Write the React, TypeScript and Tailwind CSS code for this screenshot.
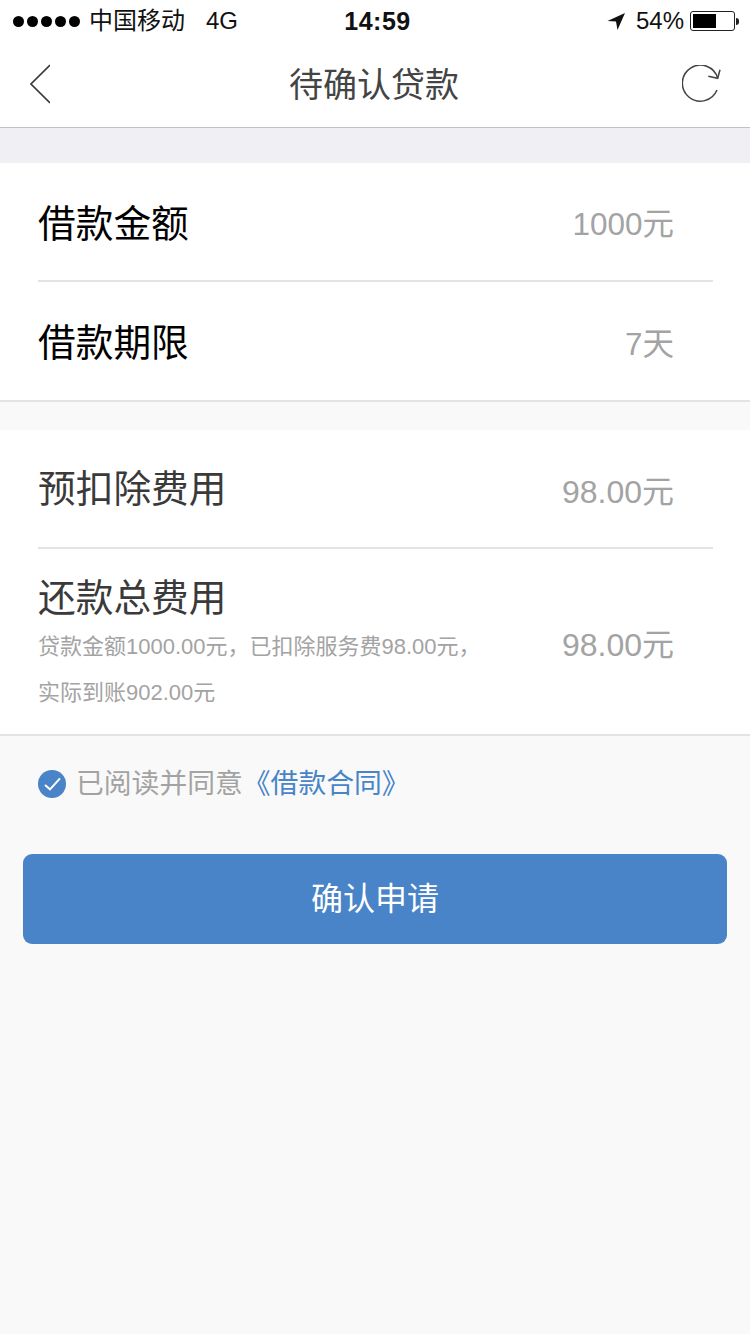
const font = "[font-family:'Liberation_Sans','Noto_Sans_CJK_SC',sans-serif]";

function StatusBar() {
  return (
    <div className="flex h-10 items-center justify-between pl-[13px] pr-[11px] pt-[2px] text-[24px] text-[#111]">
      <div className="flex w-[300px] items-center">
        <div className="flex gap-[3px]">
          {[0, 1, 2, 3, 4].map((i) => (
            <span key={i} className="h-[11px] w-[11px] rounded-full bg-black" />
          ))}
        </div>
        <span className="ml-[9px] leading-none">中国移动</span>
        <span className="ml-[21px] leading-none">4G</span>
      </div>
      <span className="ml-[3px] text-[25px] font-bold leading-none tracking-[0.5px]">14:59</span>
      <div className="flex w-[300px] items-center justify-end">
        <svg width="18" height="18" viewBox="0 0 18 18" className="mr-[11px]">
          <path d="M18 1 L0.5 9 L9 9.5 L10.5 18 Z" fill="#111" />
        </svg>
        <span className="leading-none">54%</span>
        <div className="ml-[6px] h-[20px] w-[45px] rounded-[3px] border border-[#222] p-[2px]">
          <div className="h-full w-[23px] bg-black" />
        </div>
        <div className="ml-[1px] h-[7px] w-[3px] rounded-r-full bg-[#222]" />
      </div>
    </div>
  );
}

function NavBar() {
  return (
    <div className="flex h-[88px] items-center border-b border-[#bfbfc4] pl-[30px] pr-[29px]">
      <div className="w-[100px]">
        <svg width="20" height="40" viewBox="0 0 20 40" fill="none" stroke="#3a3a3a" strokeWidth="1.6">
          <path d="M20 1 L1 20 L20 39" />
        </svg>
      </div>
      <span className="flex-1 pr-[3px] pt-[2px] text-center text-[34px] leading-none text-[#444]">待确认贷款</span>
      <div className="flex w-[100px] justify-end">
        <svg width="39" height="37" viewBox="0 0 39 37" fill="none" stroke="#444" strokeWidth="1.5">
          <path d="M35 25 A18 18 0 1 1 35.7 13.3" />
          <path d="M38 4.7 L35.7 13.3 L26.3 11.3" />
        </svg>
      </div>
    </div>
  );
}

function Row({ label, value, dark, border }: { label: string; value: string; dark?: boolean; border?: boolean }) {
  return (
    <div className={`mr-[37px] flex items-center justify-between pr-[39px] ${border ? "h-[119px] border-b-2 border-[#e3e3e3]" : "h-[118px]"}`}>
      <span className={`text-[37.7px] leading-none ${dark ? "pt-[6px] text-black" : "pt-[3px] text-[#3a3a3a]"}`}>{label}</span>
      <span className={`pt-[7px] leading-none text-[#a3a3a3] ${dark ? "text-[31.5px]" : "text-[32px]"}`}>{value}</span>
    </div>
  );
}

export default function App() {
  return (
    <div className={`flex min-h-[1334px] w-[750px] flex-col bg-[#f9f9f9] ${font}`}>
      <div className="bg-white">
        <StatusBar />
        <NavBar />
      </div>
      <div className="h-[35px] bg-[#efeff4]" />

      <div className="border-b-2 border-[#e3e3e3] bg-white pl-[38px]">
        <Row label="借款金额" value="1000元" dark border />
        <Row label="借款期限" value="7天" dark />
      </div>

      <div className="mt-[28px] border-b-2 border-[#e3e3e3] bg-white pl-[38px]">
        <Row label="预扣除费用" value="98.00元" border />
        <div className="flex h-[185px] items-center justify-between pr-[76px]">
          <div className="flex flex-col pt-[13px]">
            <span className="text-[37.7px] leading-none text-[#3a3a3a]">还款总费用</span>
            <span className="mt-[7px] text-[22px] leading-[46px] text-[#a3a3a3]">
              贷款金额1000.00元，已扣除服务费98.00元，
              <br />
              实际到账902.00元
            </span>
          </div>
          <span className="pt-[7px] text-[32px] leading-none text-[#a3a3a3]">98.00元</span>
        </div>
      </div>

      <div className="mt-[34px] flex items-center pl-[38px]">
        <svg width="28" height="28" viewBox="0 0 28 28">
          <circle cx="14" cy="14" r="14" fill="#4884c7" />
          <path d="M7 15 L12 19.3 L22 8.3" fill="none" stroke="#fff" strokeWidth="2" />
        </svg>
        <span className="ml-[10px] text-[27.8px] leading-none text-[#a3a3a3]">已阅读并同意</span>
        <span className="text-[27.8px] leading-none text-[#4884c7]">《借款合同》</span>
      </div>

      <button className="mx-[23px] mt-[56px] flex h-[90px] items-center justify-center rounded-[9px] bg-[#4884c7] text-[32px] text-white">
        确认申请
      </button>
    </div>
  );
}
